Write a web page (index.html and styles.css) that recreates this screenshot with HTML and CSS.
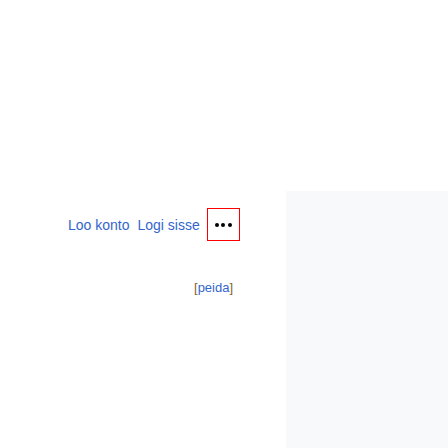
FILE: index.html
```html
<!DOCTYPE html>
<html>
<head>
<meta charset="utf-8">
<link rel="stylesheet" href="styles.css">
</head>
<body>
<div class="page">
  <div class="main">
    <div class="usernav">
      <a class="link navlink" href="#">Loo konto</a>
      <a class="link navlink" href="#">Logi sisse</a>
      <button class="more" aria-label="Veel">
        <span class="dot"></span><span class="dot"></span><span class="dot"></span>
      </button>
    </div>
    <div class="toggle"><span class="br">[</span><a class="link" href="#">peida</a><span class="br">]</span></div>
  </div>
  <div class="side"></div>
</div>
</body>
</html>
```
FILE: styles.css
```css
html, body {
  margin: 0;
  padding: 0;
  background: #ffffff;
  font-family: "Liberation Sans", Arial, sans-serif;
}
.page {
  display: flex;
  height: 448px;
  padding-top: 191px;
  box-sizing: border-box;
}
.main {
  width: 286px;
  display: flex;
  flex-direction: column;
}
.side {
  flex: 1;
  background: #f8f9fa;
}
.usernav {
  display: flex;
  align-items: center;
  padding-top: 17px;
  padding-left: 68px;
  height: 33px;
}
.link {
  color: #3366cc;
  text-decoration: none;
}
.navlink {
  font-size: 14px;
  line-height: 16px;
  margin-right: 8px;
}
.more {
  margin-left: -1px;
  width: 33px;
  height: 33px;
  box-sizing: border-box;
  border: 1px solid #ff0000;
  border-radius: 0;
  background: #fff;
  display: flex;
  align-items: center;
  justify-content: center;
  gap: 2.5px;
  padding: 0;
}
.dot {
  width: 4px;
  height: 4px;
  border-radius: 50%;
  background: #000;
}
.toggle {
  margin-top: 39px;
  padding-left: 194px;
  font-size: 13px;
  line-height: 15px;
}
.br {
  color: #85632f;
}
```
